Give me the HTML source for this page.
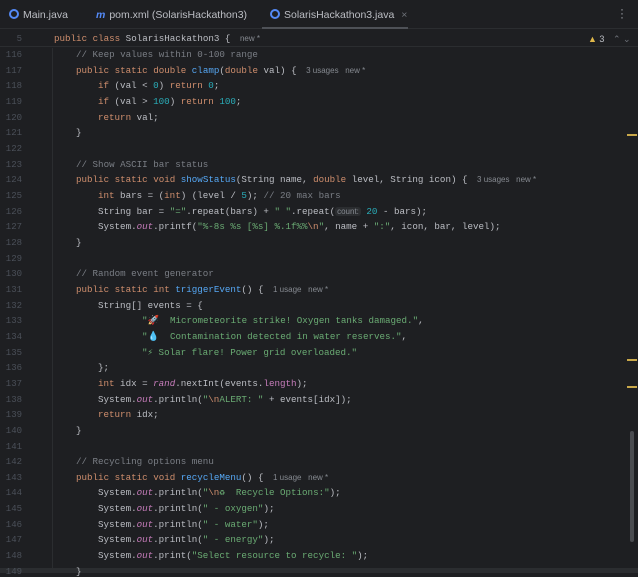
<!DOCTYPE html>
<html><head><meta charset="utf-8"><style>
*{margin:0;padding:0;box-sizing:border-box}
body{width:638px;height:573px;background:#1e1f22;overflow:hidden;position:relative;font-family:"Liberation Sans",sans-serif}
.tabs{position:absolute;left:0;top:0;width:638px;height:29px;border-bottom:1px solid #2b2d30;color:#bcbec4;font-size:10.5px}
.tab{position:absolute;top:9px;white-space:nowrap}
.ic{display:inline-block;width:10px;height:10px;border-radius:50%;border:2px solid #548af7;vertical-align:-1px;margin-right:4px}
.act{position:absolute;left:262px;top:27px;width:146px;height:2px;background:#4e5157}
.sticky{position:absolute;left:0;top:30px;width:638px;height:17px;border-bottom:1px solid #2b2d30;background:#1e1f22}
.ln{position:absolute;left:0;width:22px;text-align:right;color:#4b5059;font:9px "Liberation Mono",monospace}
.code{position:absolute;white-space:pre;color:#bcbec4;font:9.2px "Liberation Mono","DejaVu Sans Mono",monospace}
.k{color:#cf8e6d}.c{color:#7a7e85}.s{color:#6aab73}.m{color:#56a8f5}.n{color:#2aacb8}.f{color:#c77dbb;font-style:italic}.p{color:#c77dbb}
.h{color:#868a91;font:8px "Liberation Sans",sans-serif;margin-left:4px}
.hb{color:#868a91;font:8px "Liberation Sans",sans-serif;background:#2b2d30;border-radius:3px;padding:0 2px}
.mk{position:absolute;left:627px;width:10px;height:2px;background:#c9a84a}
</style></head><body>
<div class="tabs">
<div class="tab" style="left:9px"><span class="ic"></span>Main.java</div>
<div class="tab" style="left:96px"><span style="color:#548af7;font-style:italic;font-weight:bold;margin-right:4px">m</span>pom.xml (SolarisHackathon3)</div>
<div class="tab" style="left:270px"><span class="ic"></span>SolarisHackathon3.java <span style="color:#6f737a;margin-left:4px">×</span></div>
<div style="position:absolute;left:620px;top:7px;color:#9da0a8;font-size:12px;line-height:4px;width:4px;text-align:center">·<br>·<br>·</div>
<div class="act"></div>
</div>
<div class="sticky">
<div class="ln" style="top:4px">5</div>
<div class="code" style="left:54px;top:3px"><span class="k">public class</span> SolarisHackathon3 { <span class="h">new *</span></div>
<div style="position:absolute;left:588px;top:4px;font-size:9px;color:#bcbec4"><span style="color:#e0b84a">▲</span> 3 <span style="color:#6f737a;margin-left:6px">⌃ ⌄</span></div>
</div>
<div style="position:absolute;left:52px;top:48px;width:1px;height:525px;background:#2b2d30"></div>
<div style="position:absolute;left:0;top:568px;width:638px;height:5px;background:#2b2d30"></div>
<div class="mk" style="top:134px"></div><div class="mk" style="top:359px"></div><div class="mk" style="top:386px"></div>
<div style="position:absolute;left:630px;top:431px;width:4px;height:111px;background:#4a4c50;border-radius:2px"></div>
<div id="L"></div>
<script>
var L=[
[116,22,'<span class="c">// Keep values within 0-100 range</span>'],
[117,22,'<span class="k">public static double</span> <span class="m">clamp</span>(<span class="k">double</span> val) { <span class="h">3 usages&nbsp;&nbsp; new *</span>'],
[118,44,'<span class="k">if</span> (val &lt; <span class="n">0</span>) <span class="k">return</span> <span class="n">0</span>;'],
[119,44,'<span class="k">if</span> (val &gt; <span class="n">100</span>) <span class="k">return</span> <span class="n">100</span>;'],
[120,44,'<span class="k">return</span> val;'],
[121,22,'}'],[122,0,''],
[123,22,'<span class="c">// Show ASCII bar status</span>'],
[124,22,'<span class="k">public static void</span> <span class="m">showStatus</span>(String name, <span class="k">double</span> level, String icon) { <span class="h">3 usages&nbsp;&nbsp; new *</span>'],
[125,44,'<span class="k">int</span> bars = (<span class="k">int</span>) (level / <span class="n">5</span>); <span class="c">// 20 max bars</span>'],
[126,44,'String bar = <span class="s">"="</span>.repeat(bars) + <span class="s">" "</span>.repeat(<span class="hb">count:</span> <span class="n">20</span> - bars);'],
[127,44,'System.<span class="f">out</span>.printf(<span class="s">"%-8s %s [%s] %.1f%%<span class="k">\\n</span>"</span>, name + <span class="s">":"</span>, icon, bar, level);'],
[128,22,'}'],[129,0,''],
[130,22,'<span class="c">// Random event generator</span>'],
[131,22,'<span class="k">public static int</span> <span class="m">triggerEvent</span>() { <span class="h">1 usage&nbsp;&nbsp; new *</span>'],
[132,44,'String[] events = {'],
[133,88,'<span class="s">"🚀  Micrometeorite strike! Oxygen tanks damaged."</span>,'],
[134,88,'<span class="s">"💧  Contamination detected in water reserves."</span>,'],
[135,88,'<span class="s">"⚡ Solar flare! Power grid overloaded."</span>'],
[136,44,'};'],
[137,44,'<span class="k">int</span> idx = <span class="f">rand</span>.nextInt(events.<span class="p">length</span>);'],
[138,44,'System.<span class="f">out</span>.println(<span class="s">"<span class="k">\\n</span>ALERT: "</span> + events[idx]);'],
[139,44,'<span class="k">return</span> idx;'],
[140,22,'}'],[141,0,''],
[142,22,'<span class="c">// Recycling options menu</span>'],
[143,22,'<span class="k">public static void</span> <span class="m">recycleMenu</span>() { <span class="h">1 usage&nbsp;&nbsp; new *</span>'],
[144,44,'System.<span class="f">out</span>.println(<span class="s">"<span class="k">\\n</span>♻  Recycle Options:"</span>);'],
[145,44,'System.<span class="f">out</span>.println(<span class="s">" - oxygen"</span>);'],
[146,44,'System.<span class="f">out</span>.println(<span class="s">" - water"</span>);'],
[147,44,'System.<span class="f">out</span>.println(<span class="s">" - energy"</span>);'],
[148,44,'System.<span class="f">out</span>.print(<span class="s">"Select resource to recycle: "</span>);'],
[149,22,'}']
];
var h='';
L.forEach(function(a){var t=49+(a[0]-116)*15.66;
h+='<div class="ln" style="top:'+(t+1)+'px">'+a[0]+'</div><div class="code" style="left:'+(54+a[1])+'px;top:'+t+'px">'+a[2]+'</div>';});
document.getElementById('L').innerHTML=h;
</script>
</body></html>
